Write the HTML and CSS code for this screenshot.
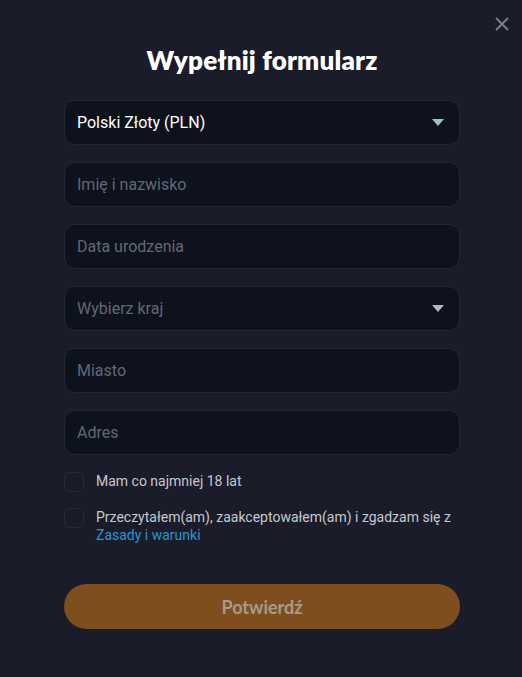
FILE: index.html
```html
<!DOCTYPE html>
<html lang="pl">
<head>
<meta charset="utf-8">
<link rel="stylesheet" href="styles.css">
</head>
<body>
<div class="modal">
  <button class="close" aria-label="Zamknij">
    <svg width="14" height="14" viewBox="0 0 14 14"><path d="M1 1L13 13M13 1L1 13" stroke="#7b808c" stroke-width="1.8" fill="none"/></svg>
  </button>
  <h1 class="title">Wypełnij formularz</h1>
  <form class="form">
    <div class="field select filled">
      <span>Polski Złoty (PLN)</span>
      <span class="caret teal"></span>
    </div>
    <div class="field"><span class="ph">Imię i nazwisko</span></div>
    <div class="field"><span class="ph">Data urodzenia</span></div>
    <div class="field select">
      <span class="ph">Wybierz kraj</span>
      <span class="caret"></span>
    </div>
    <div class="field"><span class="ph">Miasto</span></div>
    <div class="field"><span class="ph">Adres</span></div>
    <div class="checks">
      <label class="check"><span class="box"></span><span class="ctext">Mam co najmniej 18 lat</span></label>
      <label class="check"><span class="box"></span><span class="ctext">Przeczytałem(am), zaakceptowałem(am) i zgadzam się z <a class="link">Zasady i warunki</a></span></label>
    </div>
    <div class="submit">Potwierdź</div>
  </form>
</div>
</body>
</html>
```
FILE: styles.css
```css
html, body {
  margin: 0;
  padding: 0;
  background: #1b1c29;
  width: 522px;
  height: 677px;
  overflow: hidden;
}
.modal {
  position: relative;
  box-sizing: border-box;
  width: 522px;
  height: 677px;
  padding: 44px 62px 0 64px;
  font-family: Roboto, "Liberation Sans", sans-serif;
}
.close {
  position: absolute;
  top: 17px;
  right: 13px;
  background: none;
  border: 0;
  padding: 0;
  width: 14px;
  height: 14px;
  display: flex;
}
.title {
  margin: 0;
  text-align: center;
  font-family: Lato, "Open Sans", sans-serif;
  font-weight: 800;
  font-size: 26px;
  line-height: 32px;
  color: #ffffff;
  letter-spacing: 0.2px;
}
.form {
  margin-top: 24px;
  display: flex;
  flex-direction: column;
  gap: 17px;
}
.field {
  box-sizing: border-box;
  height: 45px;
  border: 1px solid #232635;
  border-radius: 11px;
  background: #0e121c;
  display: flex;
  align-items: center;
  justify-content: space-between;
  padding: 0 15px 0 12px;
  font-size: 16px;
  color: #ffffff;
}
.field .ph {
  color: #626877;
}
.caret {
  width: 0;
  height: 0;
  border-left: 6px solid transparent;
  border-right: 6px solid transparent;
  border-top: 7px solid #b3b6be;
}
.caret.teal {
  border-top-color: #9bc3c6;
}
.checks {
  display: flex;
  flex-direction: column;
  gap: 16px;
  margin-top: 0;
}
.check {
  display: flex;
  align-items: flex-start;
  gap: 12px;
}
.box {
  flex: none;
  box-sizing: border-box;
  width: 20px;
  height: 20px;
  border: 1px solid #272a37;
  border-radius: 5px;
  background: #1a1c28;
}
.ctext {
  font-size: 14px;
  line-height: 18px;
  color: #c4c8d0;
}
.link {
  color: #2a94d6;
}
.submit {
  margin-top: 23px;
  height: 45px;
  border-radius: 23px;
  background: #7e4e1f;
  display: flex;
  align-items: center;
  justify-content: center;
  font-family: Lato, "Open Sans", sans-serif;
  font-weight: 700;
  font-size: 18px;
  color: #a99a8b;
}
```
